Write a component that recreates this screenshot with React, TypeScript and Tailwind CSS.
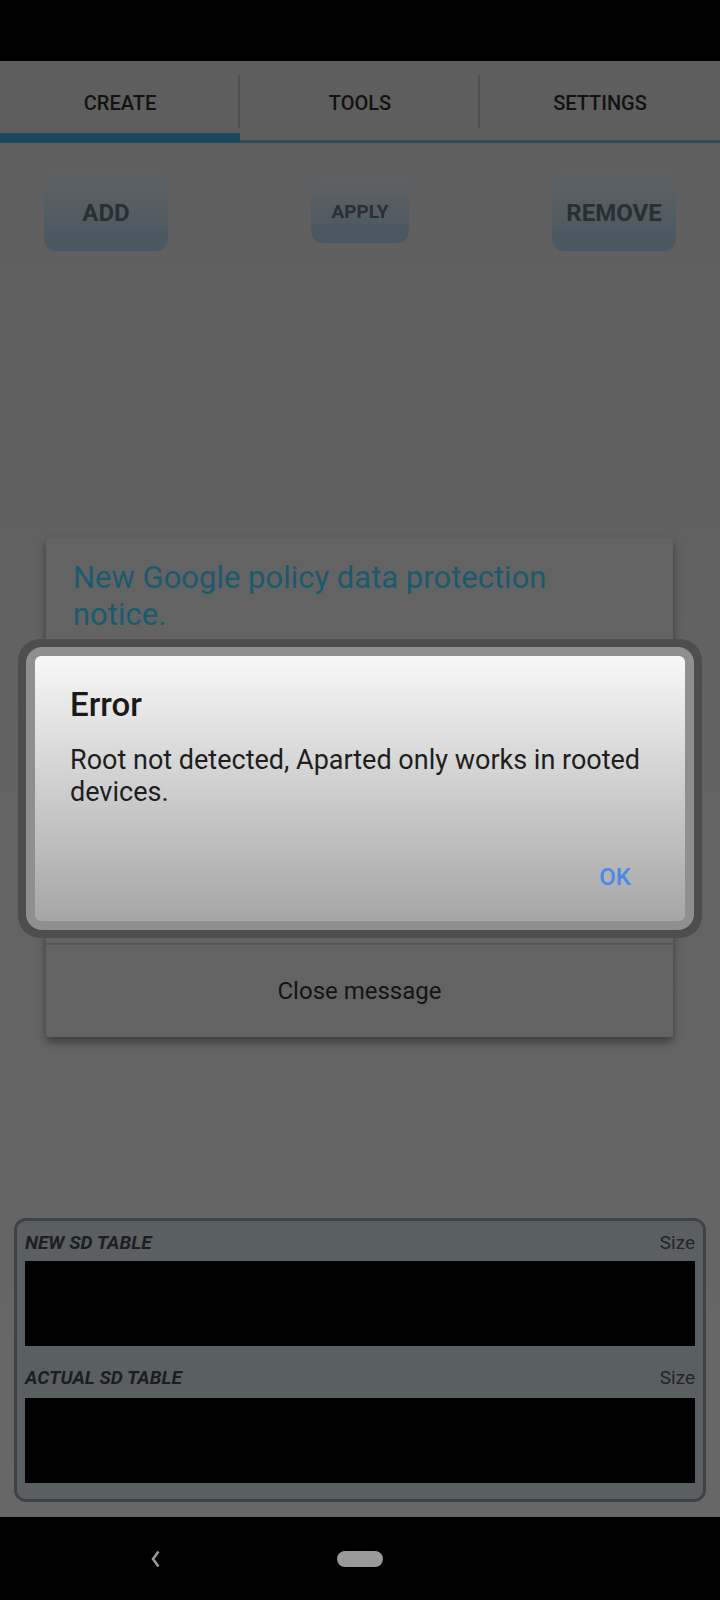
import React from 'react'

const font = { fontFamily: 'Roboto, "Noto Sans", sans-serif' }

const Tab = ({ label, active, last }: { label: string; active?: boolean; last?: boolean }) => {
  return (
    <div className="relative flex flex-1 flex-col">
      <div className="flex flex-1 items-center justify-center pt-[12px]">
        <span className="text-[20px] font-medium text-[#121212]">{label}</span>
      </div>
      {active ? (
        <div className="h-[10px] bg-[#174a5c]" />
      ) : (
        <div className="h-[10px] flex flex-col justify-end">
          <div className="h-[3px] bg-[#2c4f5b]" />
        </div>
      )}
      {!last && <div className="absolute right-0 top-[14px] h-[53px] w-[2px] bg-[#505050]" />}
    </div>
  )
}

export default function App() {
  return (
    <div className="relative flex h-[1600px] w-[720px] flex-col overflow-hidden bg-[#636363]" style={font}>
      {/* status bar */}
      <div className="h-[61px] bg-black" />

      {/* tabs */}
      <div className="flex h-[82px] bg-[#5e5e5e]">
        <Tab label="CREATE" active />
        <Tab label="TOOLS" />
        <Tab label="SETTINGS" last />
      </div>

      {/* main */}
      <div className="flex flex-1 flex-col bg-gradient-to-b from-[#5f5f5f] to-[#676767]">
        <div className="flex items-center justify-between px-[44px] pt-[27px]">
          <button className="flex h-[81px] w-[124px] items-center justify-center rounded-[12px] bg-gradient-to-b from-[#5f6264] to-[#485760] pt-[4px] text-[24px] font-bold text-[#2a2f33]">
            ADD
          </button>
          <button className="flex h-[65px] w-[98px] items-center justify-center rounded-[12px] bg-gradient-to-b from-[#5f6264] to-[#485760] pt-[4px] text-[19px] font-bold text-[#2a2f33]">
            APPLY
          </button>
          <button className="flex h-[81px] w-[124px] items-center justify-center rounded-[12px] bg-gradient-to-b from-[#5f6264] to-[#485760] pt-[4px] text-[24px] font-bold text-[#2a2f33]">
            REMOVE
          </button>
        </div>

        <div className="mx-[14px] mb-[15px] mt-auto flex flex-col rounded-[12px] border-[3px] border-[#3f4345] bg-[#5a5f62] px-[8px] pb-[16px]">
          <div className="flex h-[40px] items-center justify-between pt-[4px]">
            <span className="text-[19px] font-bold italic text-[#1c1e1f]">NEW SD TABLE</span>
            <span className="text-[19px] text-[#232526]">Size</span>
          </div>
          <div className="h-[85px] bg-black" />
          <div className="flex h-[52px] items-center justify-between pt-[12px]">
            <span className="text-[19px] font-bold italic text-[#1c1e1f]">ACTUAL SD TABLE</span>
            <span className="text-[19px] text-[#232526]">Size</span>
          </div>
          <div className="h-[85px] bg-black" />
        </div>
      </div>

      {/* nav bar */}
      <div className="flex h-[83px] items-center bg-black pl-[149px]">
        <svg width="14" height="22" viewBox="0 0 14 22">
          <path d="M9.5 3.5 L4 11 L9.5 18.5" fill="none" stroke="#9a9a9a" strokeWidth="2.5" />
        </svg>
        <div className="ml-[174px] h-[16px] w-[46px] rounded-full bg-[#9a9a9a]" />
      </div>

      {/* policy notice dialog (behind) */}
      <div className="absolute left-[46px] top-[538px] flex h-[499px] w-[627px] flex-col rounded-[2px] bg-[#636363] shadow-[0_5px_9px_rgba(0,0,0,0.4)]">
        <div className="px-[27px] pt-[21px] text-[31px] leading-[37px] text-[#1b5a6e]">
          New Google policy data protection notice.
        </div>
        <div className="mt-auto h-[2px] bg-[#575757]" />
        <div className="flex h-[92px] items-center justify-center text-[24px] text-[#141414]">
          Close message
        </div>
      </div>

      {/* error dialog */}
      <div className="absolute left-[18px] top-[639px] h-[299px] w-[684px] rounded-[22px] bg-[#4e4e4e] p-[8px]">
        <div className="h-full w-full rounded-[16px] bg-[#8f8f8f] p-[9px]">
          <div className="flex h-full w-full flex-col rounded-[6px] bg-gradient-to-b from-[#f8f8f8] to-[#a6a6a6] px-[35px]">
            <div className="pt-[30px] text-[33px] font-medium leading-[38px] text-[#1a1a1a]">Error</div>
            <div className="pt-[20px] text-[27px] leading-[32px] text-[#1e1e1e]">
              Root not detected, Aparted only works in rooted devices.
            </div>
            <div className="mt-auto flex justify-end pb-[29px] pr-[19px]">
              <span className="text-[24px] font-medium leading-[30px] text-[#4a88ea]">OK</span>
            </div>
          </div>
        </div>
      </div>
    </div>
  )
}
